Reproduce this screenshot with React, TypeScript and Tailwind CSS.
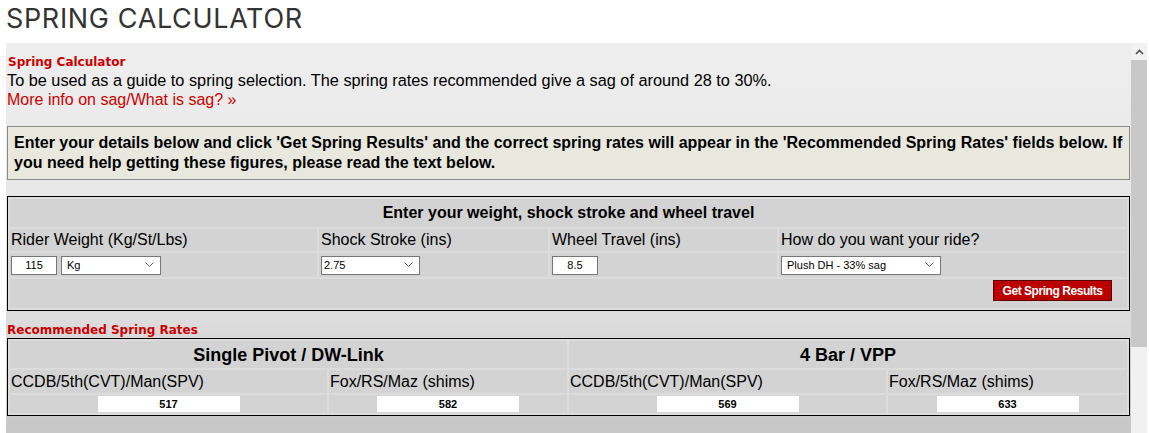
const arial = "font-['Liberation_Sans',Arial,sans-serif]";
const heading = "font-['DejaVu_Sans',Verdana,sans-serif] text-[12px] leading-[16px] font-bold text-[#cc0000]";

function Chevron() {
  return (
    <svg width="9" height="6" viewBox="0 0 9 6" className="shrink-0">
      <path d="M0.5 0.5 L4.5 4.5 L8.5 0.5" fill="none" stroke="#5a5a5a" strokeWidth="1" />
    </svg>
  );
}

function FakeSelect({ value, width, pad }: { value: string; width: string; pad: string }) {
  return (
    <div
      className={`${width} ${pad} h-[19px] flex items-center justify-between pr-[6px] bg-white border border-[#767676] text-[11px] text-black`}
    >
      <span>{value}</span>
      <Chevron />
    </div>
  );
}

function TextBox({ value }: { value: string }) {
  return (
    <div className="w-[46px] h-[19px] flex items-center justify-center bg-white border border-[#767676] text-[11px] text-black">
      {value}
    </div>
  );
}

function RateBox({ value }: { value: string }) {
  return (
    <div className="w-[142px] h-[16px] bg-white flex items-center justify-center text-[11px] font-bold text-black">
      {value}
    </div>
  );
}

const cell = "bg-[#d3d3d3]";

export default function App() {
  return (
    <div className={`w-[1150px] h-[433px] overflow-hidden bg-white ${arial}`}>
      {/* Page title */}
      <div className="h-[43px] pl-[6px] font-['Inter',sans-serif] text-[27px] leading-[37px] tracking-[0.65px] text-[#333333]">
        SPRING CALCULATOR
      </div>

      {/* Embedded calculator frame */}
      <div className="ml-[6px] w-[1141px] h-[390px] flex">
        <div className="flex-1 min-w-0 px-px pt-[11px] bg-[linear-gradient(to_bottom,#efeeee_0px,#e8e8e8_144px,#dcdcdc_279px,#c8c8c8_382px)]">
          <div className={`${heading} pl-px`}>Spring Calculator</div>
          <div className="text-[16.3px] leading-[20px] text-black">
            To be used as a guide to spring selection. The spring rates recommended give a sag of around 28 to 30%.
          </div>
          <div className="text-[16px] leading-[20px] text-[#cc0000]">More info on sag/What is sag? »</div>

          {/* Notice */}
          <div className="mt-[16px] border border-[#8a8a8a] bg-[#e8e8df] px-[6px] py-[6px] text-[16px] leading-[20px] font-bold text-black">
            Enter your details below and click 'Get Spring Results' and the correct spring rates will appear in the
            'Recommended Spring Rates' fields below. If you need help getting these figures, please read the text below.
          </div>

          {/* Input table */}
          <div className="mt-[16px] border border-black bg-[#dcdcdc] p-[2px] grid grid-cols-[307px_229px_227px_1fr] gap-[2px] text-black">
            <div className={`${cell} col-span-4 h-[28px] flex items-center justify-center text-[16px] font-bold`}>
              Enter your weight, shock stroke and wheel travel
            </div>
            <div className={`${cell} h-[22px] flex items-center pl-px text-[16px]`}>Rider Weight (Kg/St/Lbs)</div>
            <div className={`${cell} h-[22px] flex items-center pl-[2px] text-[16px]`}>Shock Stroke (ins)</div>
            <div className={`${cell} h-[22px] flex items-center pl-[2px] text-[16px]`}>Wheel Travel (ins)</div>
            <div className={`${cell} h-[22px] flex items-center pl-[2px] text-[16px]`}>How do you want your ride?</div>
            <div className={`${cell} h-[24px] flex items-center gap-[4px] pl-px`}>
              <TextBox value="115" />
              <FakeSelect value="Kg" width="w-[100px]" pad="pl-[5px]" />
            </div>
            <div className={`${cell} h-[24px] flex items-center pl-[2px]`}>
              <FakeSelect value="2.75" width="w-[99px]" pad="pl-[2px]" />
            </div>
            <div className={`${cell} h-[24px] flex items-center pl-[2px]`}>
              <TextBox value="8.5" />
            </div>
            <div className={`${cell} h-[24px] flex items-center pl-[2px]`}>
              <FakeSelect value="Plush DH - 33% sag" width="w-[160px]" pad="pl-[5px]" />
            </div>
            <div className={`${cell} col-span-4 h-[29px] flex justify-end items-start pt-px pr-[15px]`}>
              <button className="w-[119px] h-[21px] bg-[#bb0000] border border-[#5c0000] text-white text-[12px] font-bold tracking-[-0.45px] leading-none">
                Get Spring Results
              </button>
            </div>
          </div>

          <div className={`${heading} mt-[11px]`}>Recommended Spring Rates</div>

          {/* Results table */}
          <div className="border border-black bg-[#dcdcdc] p-[2px] grid grid-cols-[317px_238px_317px_1fr] gap-[2px] text-black">
            <div className={`${cell} col-span-2 h-[27px] flex items-center justify-center pt-px text-[18px] font-bold`}>
              Single Pivot / DW-Link
            </div>
            <div className={`${cell} col-span-2 h-[27px] flex items-center justify-center pt-px text-[18px] font-bold`}>
              4 Bar / VPP
            </div>
            {["CCDB/5th(CVT)/Man(SPV)", "Fox/RS/Maz (shims)", "CCDB/5th(CVT)/Man(SPV)", "Fox/RS/Maz (shims)"].map((l, i) => (
              <div key={i} className={`${cell} h-[23px] flex items-center pl-px text-[16px]`}>
                {l}
              </div>
            ))}
            {["517", "582", "569", "633"].map((v) => (
              <div key={v} className={`${cell} h-[18px] flex items-center justify-center`}>
                <RateBox value={v} />
              </div>
            ))}
          </div>
        </div>

        {/* Scrollbar */}
        <div className="w-[16px] bg-[#f1f1f1] flex flex-col">
          <div className="h-[17px] flex items-center justify-center">
            <svg width="9" height="6" viewBox="0 0 9 6">
              <path d="M1 5 L4.5 1.5 L8 5" fill="none" stroke="#505050" strokeWidth="1.6" />
            </svg>
          </div>
          <div className="h-[287px] bg-[#c8c8c8]" />
        </div>
      </div>
    </div>
  );
}
